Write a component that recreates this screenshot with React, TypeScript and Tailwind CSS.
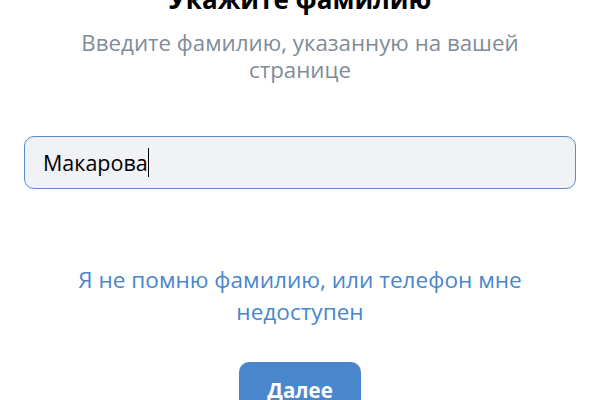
import React from "react";

export default function App() {
  return (
    <div
      className="w-[600px] h-[400px] overflow-hidden bg-white flex flex-col items-center px-6"
      style={{ fontFamily: '"Open Sans", "Noto Sans", sans-serif' }}
    >
      <h1 className="mt-[-17px] text-[26px] leading-[32px] font-bold text-black text-center whitespace-nowrap">
        Укажите фамилию
      </h1>
      <p className="mt-[14px] text-[22.3px] leading-[27px] text-[#818c99] text-center max-w-[470px]">
        Введите фамилию, указанную на вашей странице
      </p>
      <div className="mt-[53px] w-full h-[53px] shrink-0 rounded-[10px] border border-[#5b8cc4] bg-[#f0f2f5] flex items-center pl-[18px]">
        <span className="text-[21.5px] leading-[30px] text-black">Макарова</span>
        <span className="w-px h-[29px] bg-black" />
      </div>
      <a className="mt-[75px] text-[22.6px] leading-[32px] text-[#4a86cc] text-center max-w-[480px]">
        Я не помню фамилию, или телефон мне недоступен
      </a>
      <button className="mt-[34px] w-[122px] h-[56px] shrink-0 rounded-[10px] bg-[#4a86cc] text-white text-[20.5px] font-bold">
        Далее
      </button>
    </div>
  );
}
